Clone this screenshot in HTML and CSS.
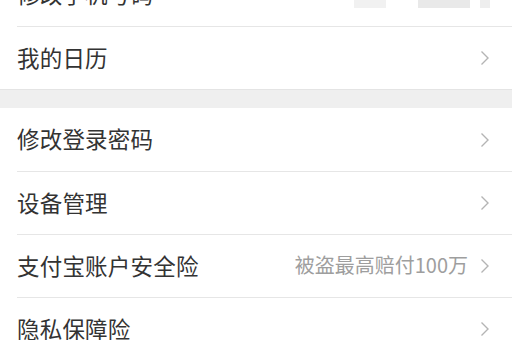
FILE: index.html
```html
<!DOCTYPE html>
<html lang="zh-CN">
<head>
    <meta charset="UTF-8">
    <meta name="viewport" content="width=device-width, initial-scale=1.0">
    <title>账户设置</title>
    <link rel="stylesheet" href="styles.css">
</head>
<body>
    <div class="page">
        <div class="group">
            <div class="row">
                <span class="label">修改手机号码</span>
                <span class="mask">
                    <i class="blk b1"></i>
                    <i class="blk b2"></i>
                    <i class="blk b3"></i>
                </span>
            </div>
            <div class="row">
                <span class="label">我的日历</span>
                <svg class="arrow" width="10" height="16" viewBox="0 0 10 16"><polyline points="1.5,1.5 8,8 1.5,14.5" /></svg>
            </div>
        </div>

        <div class="group">
            <div class="row">
                <span class="label">修改登录密码</span>
                <svg class="arrow" width="10" height="16" viewBox="0 0 10 16"><polyline points="1.5,1.5 8,8 1.5,14.5" /></svg>
            </div>
            <div class="row">
                <span class="label">设备管理</span>
                <svg class="arrow" width="10" height="16" viewBox="0 0 10 16"><polyline points="1.5,1.5 8,8 1.5,14.5" /></svg>
            </div>
            <div class="row">
                <span class="label">支付宝账户安全险</span>
                <span class="hint">被盗最高赔付100万</span>
                <svg class="arrow" width="10" height="16" viewBox="0 0 10 16"><polyline points="1.5,1.5 8,8 1.5,14.5" /></svg>
            </div>
            <div class="row">
                <span class="label">隐私保障险</span>
                <svg class="arrow" width="10" height="16" viewBox="0 0 10 16"><polyline points="1.5,1.5 8,8 1.5,14.5" /></svg>
            </div>
        </div>
    </div>
</body>
</html>
```

FILE: styles.css
```css
* {
    margin: 0;
    padding: 0;
    box-sizing: border-box;
}

body {
    background: #efefef;
    font-family: "Noto Sans CJK SC", "Noto Sans", sans-serif;
    color: #333333;
    overflow: hidden;
}

.page {
    margin-top: -37px;
}

.group {
    background: #ffffff;
    border-bottom: 1px solid #e4e4e4;
}

.group + .group {
    margin-top: 18px;
}

.row {
    display: flex;
    align-items: center;
    height: 63px;
    padding: 0 22px 0 17px;
}

.row + .row {
    border-top: 1px solid #e6e6e6;
    margin-left: 17px;
    padding-left: 0;
}

.label {
    flex: 1;
    font-size: 22.5px;
    line-height: 1;
    margin-top: -2px;
    letter-spacing: 0.2px;
}

.hint {
    font-size: 20px;
    line-height: 1;
    margin-top: -2px;
    color: #9e9e9e;
    margin-right: 12px;
}

.arrow {
    fill: none;
    stroke: #b4b4b4;
    stroke-width: 1.4;
}

.mask {
    display: flex;
    align-items: center;
}

.blk {
    display: block;
    height: 26px;
}

.b1 {
    width: 32px;
    background: #f1f1f1;
    margin-right: 32px;
}

.b2 {
    width: 52px;
    background: #e9e9e9;
    margin-right: 10px;
}

.b3 {
    width: 10px;
    background: #eeeeee;
}
```
